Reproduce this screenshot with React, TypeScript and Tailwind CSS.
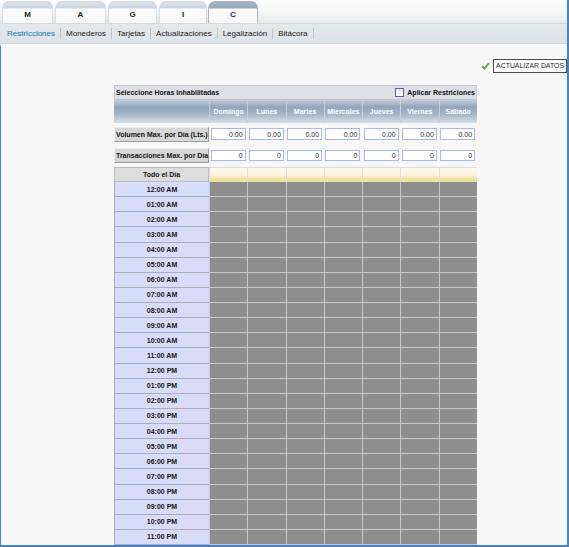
import React from 'react';

const tabs = [
  { label: 'M', w: 'w-[51px]', ml: 'ml-[2px]', active: false },
  { label: 'A', w: 'w-[51px]', ml: 'ml-[2px]', active: false },
  { label: 'G', w: 'w-[49px]', ml: 'ml-[2px]', active: false },
  { label: 'I', w: 'w-[48px]', ml: 'ml-[2px]', active: false },
  { label: 'C', w: 'w-[50px]', ml: 'ml-[1px]', active: true },
];

const subnav = ['Restricciones', 'Monederos', 'Tarjetas', 'Actualizaciones', 'Legalización', 'Bitácora'];
const days = ['Domingo', 'Lunes', 'Martes', 'Miercoles', 'Jueves', 'Viernes', 'Sábado'];
const hours = [
  '12:00 AM', '01:00 AM', '02:00 AM', '03:00 AM', '04:00 AM', '05:00 AM', '06:00 AM', '07:00 AM',
  '08:00 AM', '09:00 AM', '10:00 AM', '11:00 AM', '12:00 PM', '01:00 PM', '02:00 PM', '03:00 PM',
  '04:00 PM', '05:00 PM', '06:00 PM', '07:00 PM', '08:00 PM', '09:00 PM', '10:00 PM', '11:00 PM',
];

function InputBox({ value, h }: { value: string; h: string }) {
  return (
    <div className="w-[38.25px] flex justify-center">
      <div
        className={`w-[35px] ${h} bg-white border border-[#a9b8e8] text-[7px] leading-none text-[#2a2a2a] flex items-center justify-end pr-[2px]`}
      >
        {value}
      </div>
    </div>
  );
}

export default function App() {
  return (
    <div className="w-[569px] h-[547px] overflow-hidden flex flex-col bg-[#f7f7f7] border-r-2 border-b-2 border-[#4a80c4] font-['Liberation_Sans',Arial,sans-serif]">
      {/* tabs */}
      <div className="h-[23px] shrink-0 flex items-end bg-[linear-gradient(to_bottom,#fdfdfd,#f3f4f4_60%,#e6e9ea)]">
        {tabs.map((t) => (
          <div
            key={t.label}
            className={`${t.w} ${t.ml} h-[22px] rounded-t-[7px] border border-b-0 ${
              t.active
                ? 'border-[#aab6c4] bg-[linear-gradient(to_bottom,#a6b4c5_0px,#95a6b9_6px,#fdfdfd_7px,#f7f7f7_100%)] text-[#26266e]'
                : 'border-[#d3dae1] bg-[linear-gradient(to_bottom,#dbe2e9_0px,#cbd5df_6px,#fdfdfd_7px,#f7f7f7_100%)] text-[#1a1a1a]'
            } flex items-center justify-center pt-[5px] text-[8px] font-bold`}
          >
            {t.label}
          </div>
        ))}
      </div>
      {/* sub nav */}
      <div className="h-[21px] shrink-0 flex items-center pl-[2px] bg-[linear-gradient(to_bottom,#e4e9eb,#dbe2e5)] border-t border-[#d2d8db] border-b border-[#c6cdd1]">
        {subnav.map((s, i) => (
          <div
            key={s}
            className={`px-[5px] border-r border-[#bfc6ca] text-[8px] leading-[11px] ${
              i === 0 ? 'text-[#1679c4]' : 'text-[#222]'
            }`}
          >
            {s}
          </div>
        ))}
      </div>
      {/* body */}
      <div className="flex-1 border-l border-[#4a80c4] border-t-[3px] border-t-[#fcfcfc]">
        <div className="mt-[12px] h-[14px] flex items-center justify-end">
          <svg width="9" height="8" viewBox="0 0 9 8" className="mr-[3px]">
            <path d="M1 4.2 L3.4 6.6 L8 1.2" fill="none" stroke="#63a83a" strokeWidth="1.8" />
          </svg>
          <div className="h-[14px] px-[2px] bg-white border border-[#4a4a4a] flex items-center text-[6.9px] text-[#1e1e1e] leading-none whitespace-nowrap">
            ACTUALIZAR DATOS
          </div>
        </div>

        <div className="ml-[113px] mt-[12px] w-[363px] text-[7px] leading-none">
          {/* title row */}
          <div className="h-[15px] bg-[#dcdfe3] border border-[#c3c7cc] flex items-center justify-between pl-[1px] pr-[1px] font-bold text-[#151515]">
            <span>Seleccione Horas Inhabilitadas</span>
            <span className="flex items-center gap-[3px]">
              <span className="w-[9px] h-[9px] border border-[#55678a] bg-[linear-gradient(to_bottom,#e4e8ee,#fbfcfd)]" />
              <span>Aplicar Restriciones</span>
            </span>
          </div>
          {/* day header */}
          <div className="h-[23px] flex bg-[linear-gradient(to_bottom,#c3ced9_0%,#92a6bb_30%,#a3b4c6_60%,#d7dfe7_100%)]">
            <div className="w-[95px]" />
            {days.map((d) => (
              <div
                key={d}
                className="w-[38.25px] border-l border-[#c5d0db] flex items-center justify-center text-white font-bold"
              >
                {d}
              </div>
            ))}
          </div>
          {/* volumen */}
          <div className="h-[19px] flex items-start pt-[4px]">
            <div className="w-[95px] h-[15px] bg-[#d7d7d7] border border-t-[#ececec] border-l-[#ececec] border-b-[#9d9d9d] border-r-[#9d9d9d] flex items-center px-[1px] font-bold text-[#151515] whitespace-nowrap">
              Volumen Max. por Día (Lts.)
            </div>
            <div className="flex mt-[1px]">
              {days.map((d) => (
                <InputBox key={d} value="0.00" h="h-[12px]" />
              ))}
            </div>
          </div>
          {/* transacciones */}
          <div className="h-[21px] flex items-start pt-[6px]">
            <div className="w-[95px] h-[15px] bg-[#d7d7d7] border border-t-[#ececec] border-l-[#ececec] border-b-[#9d9d9d] border-r-[#9d9d9d] flex items-center px-[1px] font-bold text-[#151515] whitespace-nowrap">
              Transacciones Max. por Día
            </div>
            <div className="flex mt-[2px]">
              {days.map((d) => (
                <InputBox key={d} value="0" h="h-[11px]" />
              ))}
            </div>
          </div>
          {/* todo el dia */}
          <div className="mt-[4px] h-[15px] flex">
            <div className="w-[95px] bg-[#dcdcdc] border border-[#bdbdbd] flex items-center justify-center font-bold text-[#151515]">
              Todo el Día
            </div>
            {days.map((d) => (
              <div
                key={d}
                className="w-[38.25px] border-l border-t border-[#dcdcdc] bg-[linear-gradient(to_bottom,#fcfaf0_0%,#f7f1d6_55%,#ede08f_85%,#ece3b5_100%)]"
              />
            ))}
          </div>
          {/* hours */}
          {hours.map((h) => (
            <div key={h} className="h-[15.125px] flex">
              <div className="w-[95px] bg-[#d7ddf8] border-b border-l border-[#aaaeba] flex items-center justify-center font-bold text-[#151515]">
                {h}
              </div>
              {days.map((d) => (
                <div key={d} className="w-[38.25px] bg-[#8e8e8e] border-l border-b border-[#c9c9c9]" />
              ))}
            </div>
          ))}
        </div>
      </div>
    </div>
  );
}
